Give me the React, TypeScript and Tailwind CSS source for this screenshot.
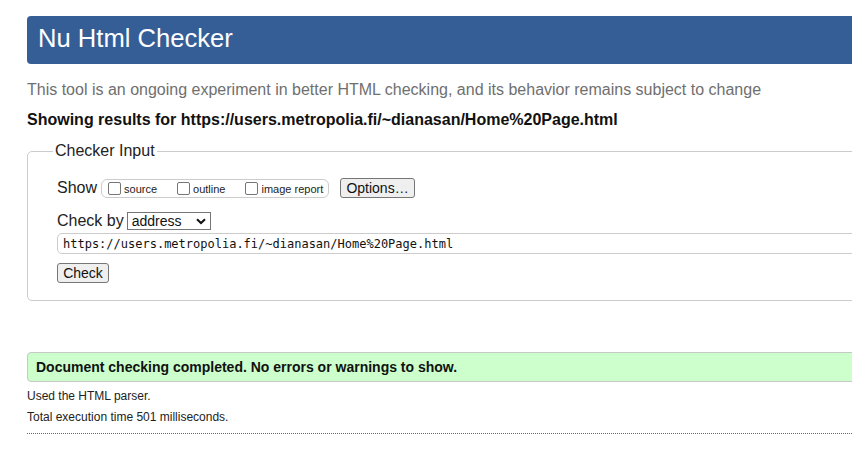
import React from "react";

const sans = "font-['Liberation_Sans',Arial,sans-serif]";

function Box({ label }: { label: string }) {
  return (
    <label className="flex items-center">
      <span className="w-[13px] h-[13px] border border-[#767676] rounded-[2px] bg-white" />
      <span className="ml-[3px] text-[11px] leading-[13px] text-[#222] pt-[3px]">{label}</span>
    </label>
  );
}

export default function App() {
  return (
    <div className={`w-[852px] h-[459px] overflow-hidden bg-white ${sans}`}>
      <div className="pl-[27px] pt-[16px] w-[900px]">
        <div className="h-[48px] bg-[#365e96] rounded-l-[4px] flex items-center pl-[11px]">
          <h1 className="text-white text-[25.6px] leading-none pb-[2px]">Nu Html Checker</h1>
        </div>

        <p className="mt-[17px] text-[16px] leading-[18px] text-[#6f6f6f]">
          This tool is an ongoing experiment in better HTML checking, and its behavior remains subject to change
        </p>
        <p className="mt-[12px] text-[16px] leading-[18px] font-bold text-[#111]">
          Showing results for https://users.metropolia.fi/~dianasan/Home%20Page.html
        </p>

        <fieldset className="mt-[13px] border border-[#cccccc] rounded-l-[5px] pl-[29px] pb-[17px]">
          <legend className="ml-[-4px] px-[2px] text-[16px] leading-[18px] text-[#222]">Checker Input</legend>

          <div className="mt-[18px] h-[20px] flex items-center text-[#222]">
            <span className="text-[16px] leading-[18px]">Show</span>
            <div className="ml-[4px] h-[19px] w-[228px] border border-[#cccccc] rounded-[6px] flex items-center pl-[6px] gap-[20px]">
              <Box label="source" />
              <Box label="outline" />
              <Box label="image report" />
            </div>
            <button className="ml-[11px] h-[20px] w-[75px] bg-[#efefef] border border-[#767676] rounded-[3px] text-[14px] leading-none text-[#111]">
              Options…
            </button>
          </div>

          <div className="mt-[14px] h-[18px] flex items-center text-[#222]">
            <span className="text-[16px] leading-[18px]">Check by</span>
            <div className="ml-[3px] h-[18px] w-[84px] border border-[#767676] flex items-center justify-between pl-[4px] pr-[4px] bg-white">
              <span className="text-[14px] leading-none text-[#111]">address</span>
              <svg width="10" height="7" viewBox="0 0 10 7">
                <path d="M1 1.2 L5 5 L9 1.2" fill="none" stroke="#111" strokeWidth="2" />
              </svg>
            </div>
          </div>

          <div className="mt-[3px] h-[21px] border border-[#cccccc] rounded-l-[5px] flex items-center pl-[5px]">
            <span className="font-['DejaVu_Sans_Mono',monospace] text-[12px] leading-none text-[#111]">
              https://users.metropolia.fi/~dianasan/Home%20Page.html
            </span>
          </div>

          <button className="mt-[9px] h-[20px] w-[52px] bg-[#efefef] border border-[#767676] rounded-[3px] text-[14px] leading-none text-[#111] block">
            Check
          </button>
        </fieldset>

        <div className="mt-[51px] h-[30px] bg-[#ccffcc] border border-[#c4c9c4] rounded-l-[4px] flex items-center pl-[8px]">
          <span className="text-[14px] font-bold text-[#111]">Document checking completed. No errors or warnings to show.</span>
        </div>
        <p className="mt-[7px] text-[12px] leading-[14px] text-[#222]">Used the HTML parser.</p>
        <p className="mt-[7px] text-[12px] leading-[14px] text-[#222]">Total execution time 501 milliseconds.</p>
        <div className="mt-[9px] border-t border-dotted border-[#666]" />
      </div>
    </div>
  );
}
